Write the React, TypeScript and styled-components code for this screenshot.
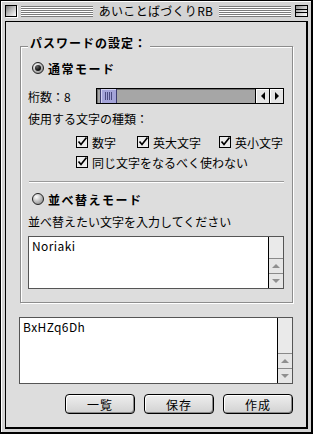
import React from 'react'
import styled, { createGlobalStyle } from 'styled-components'

const GlobalStyle = createGlobalStyle`
  html, body { margin: 0; padding: 0; background: #fff; }
  body {
    font-family: "Noto Sans CJK JP", "Noto Sans", sans-serif;
    font-size: 12px;
    color: #000;
  }
  * { box-sizing: border-box; }
`

const Window = styled.div`
  width: 313px;
  height: 434px;
  border-style: solid;
  border-color: #000;
  border-width: 1px 2px 2px 1px;
  background: #d4d4d4;
  box-shadow: inset 1px 1px 0 #fff;
  padding: 0 3px 3px 4px;
  display: flex;
  flex-direction: column;
`

const TitleBar = styled.div`
  height: 20px;
  flex: none;
  display: flex;
  align-items: center;
  gap: 4px;
`

const CloseBox = styled.div`
  width: 12px;
  height: 12px;
  flex: none;
  border: 1px solid #000;
  background: linear-gradient(135deg, #777 0%, #bbb 45%, #fff 100%);
  box-shadow: 1px 1px 0 #fff;
`

const Stripes = styled.div`
  flex: 1;
  height: 11px;
  background: repeating-linear-gradient(to bottom, #7a7a7a 0 1px, #fff 1px 2px);
`

const Title = styled.div`
  flex: none;
  padding: 0 2px;
  font-size: 12px;
  line-height: 16px;
  letter-spacing: 0.3px;
`

const ZoomBox = styled.div`
  width: 13px;
  height: 12px;
  flex: none;
  border: 1px solid #000;
  background:
    linear-gradient(#000, #000) 0 3px / 100% 1px no-repeat,
    linear-gradient(#000, #000) 0 6px / 100% 1px no-repeat,
    linear-gradient(135deg, #888 0%, #ccc 50%, #fff 100%);
`

const Content = styled.div`
  flex: 1;
  border-style: solid;
  border-color: #000;
  border-width: 1px 2px 2px 1px;
  background: #dddddd;
  padding: 24px 13px 0 14px;
  display: flex;
  flex-direction: column;
`

const GroupBox = styled.div`
  border: 1px solid #8c8c8c;
  box-shadow: inset 1px 1px 0 #fff, 1px 1px 0 #fff;
  padding: 0 8px 13px 7px;
  display: flex;
  flex-direction: column;
`

const GroupTitle = styled.div`
  margin-top: -11px;
  align-self: flex-start;
  background: #dddddd;
  padding: 0 3px 0 2px;
  font-weight: bold;
  font-size: 12px;
  line-height: 14px;
  letter-spacing: 1px;
`

const Row = styled.div<{ $top?: number; $indent?: number }>`
  height: 20px;
  margin-top: ${p => p.$top ?? 0}px;
  padding-left: ${p => p.$indent ?? 0}px;
  display: flex;
  align-items: center;
  white-space: nowrap;
`

const RadioDot = styled.span<{ $on?: boolean }>`
  position: relative;
  width: 12px;
  height: 12px;
  flex: none;
  border-radius: 50%;
  border: 1px solid #222;
  background: radial-gradient(circle at 35% 30%, #fff 0, #d0d0d0 35%, #7a7a7a 100%);
  margin-right: 4px;
  &::after {
    content: '';
    display: ${p => (p.$on ? 'block' : 'none')};
    position: absolute;
    inset: 2px;
    border-radius: 50%;
    background: radial-gradient(circle at 35% 30%, #666 0, #111 60%);
  }
`

const RadioLabel = styled.span`
  font-weight: bold;
  letter-spacing: 1.5px;
`

const Label = styled.span<{ $width?: number }>`
  width: ${p => (p.$width ? `${p.$width}px` : 'auto')};
  flex: none;
`

const Slider = styled.div`
  width: 188px;
  height: 16px;
  border: 1px solid #000;
  display: flex;
`

const SliderTrack = styled.div`
  flex: 1;
  display: flex;
  background: #a6a6a6;
  box-shadow: inset 1px 1px 0 #6e6e6e;
  padding-left: 3px;
`

const Thumb = styled.div`
  width: 17px;
  height: 100%;
  border-left: 1px solid #3c3c6e;
  border-right: 1px solid #3c3c6e;
  background:
    repeating-linear-gradient(to right, #4a4a80 0 1px, transparent 1px 2px) 4px 3px / 7px 8px no-repeat,
    #a3a3d8;
  box-shadow: inset 1px 1px 0 #d0d0f0;
`

const ArrowBox = styled.div`
  width: 14px;
  flex: none;
  border-left: 1px solid #000;
  background: #e4e4e4;
  box-shadow: inset 1px 1px 0 #fff;
  display: flex;
  align-items: center;
  justify-content: center;
`

const CheckItem = styled.span<{ $width?: number }>`
  width: ${p => (p.$width ? `${p.$width}px` : 'auto')};
  flex: none;
  display: flex;
  align-items: center;
  gap: 4px;
`

const Separator = styled.div`
  height: 2px;
  margin: 9px 0 0 1px;
  border-top: 1px solid #9a9a9a;
  border-bottom: 1px solid #fff;
`

const TextField = styled.div<{ $height: number; $top: number; $left: number }>`
  height: ${p => p.$height}px;
  margin-top: ${p => p.$top}px;
  margin-left: ${p => p.$left}px;
  border: 1px solid #555;
  background: #fff;
  display: flex;
`

const FieldText = styled.div`
  flex: 1;
  padding: 1px 3px;
  font-size: 12px;
  line-height: 16px;
  letter-spacing: 0.4px;
`

const ScrollBar = styled.div`
  width: 15px;
  flex: none;
  border-left: 1px solid #000;
  background: #eaeaea;
  display: flex;
  flex-direction: column;
  justify-content: flex-end;
`

const ScrollArrow = styled.div`
  height: 15px;
  border-top: 1px solid #8a8a8a;
  background: #e6e6e6;
  display: flex;
  align-items: center;
  justify-content: center;
`

const ButtonRow = styled.div`
  margin-top: 10px;
  display: flex;
  justify-content: flex-end;
  gap: 9px;
`

const Button = styled.div`
  width: 70px;
  height: 20px;
  border: 1px solid #000;
  border-radius: 4px;
  background: linear-gradient(#eeeeee, #d2d2d2);
  box-shadow: inset 1px 1px 0 #fff, inset -1px -1px 0 #8a8a8a;
  display: flex;
  align-items: center;
  justify-content: center;
  font-size: 12px;
  letter-spacing: 1px;
`

function Check() {
  return (
    <svg width="12" height="12" viewBox="0 0 12 12">
      <rect x="0.5" y="0.5" width="11" height="11" fill="#ececec" stroke="#000" />
      <path d="M2.5 5.5 L5 8.5 L10.5 1.5" stroke="#000" strokeWidth="1.7" fill="none" />
    </svg>
  )
}

function Tri({ dir, color }: { dir: 'left' | 'right' | 'up' | 'down'; color: string }) {
  const pts = {
    left: '4,0 4,8 0,4',
    right: '0,0 0,8 4,4',
    up: '0,4 8,4 4,0',
    down: '0,0 8,0 4,4',
  }[dir]
  const horiz = dir === 'left' || dir === 'right'
  return (
    <svg width={horiz ? 4 : 8} height={horiz ? 8 : 4} viewBox={horiz ? '0 0 4 8' : '0 0 8 4'}>
      <polygon points={pts} fill={color} />
    </svg>
  )
}

function Field({ text, height, top, left = 0 }: { text: string; height: number; top: number; left?: number }) {
  return (
    <TextField $height={height} $top={top} $left={left}>
      <FieldText>{text}</FieldText>
      <ScrollBar>
        <ScrollArrow><Tri dir="up" color="#8f8f8f" /></ScrollArrow>
        <ScrollArrow><Tri dir="down" color="#8f8f8f" /></ScrollArrow>
      </ScrollBar>
    </TextField>
  )
}

export default function App() {
  return (
    <>
      <GlobalStyle />
      <Window>
        <TitleBar>
          <CloseBox />
          <Stripes />
          <Title>あいことばづくりRB</Title>
          <Stripes />
          <ZoomBox />
        </TitleBar>
        <Content>
          <GroupBox>
            <GroupTitle>パスワードの設定：</GroupTitle>
            <Row $top={8} $indent={4}>
              <RadioDot $on />
              <RadioLabel>通常モード</RadioLabel>
            </Row>
            <Row $top={8}>
              <Label $width={68}>桁数：8</Label>
              <Slider>
                <SliderTrack>
                  <Thumb />
                </SliderTrack>
                <ArrowBox><Tri dir="left" color="#000" /></ArrowBox>
                <ArrowBox><Tri dir="right" color="#000" /></ArrowBox>
              </Slider>
            </Row>
            <Row $top={2}>
              <Label>使用する文字の種類：</Label>
            </Row>
            <Row $top={4} $indent={48}>
              <CheckItem $width={61}><Check />数字</CheckItem>
              <CheckItem $width={82}><Check />英大文字</CheckItem>
              <CheckItem><Check />英小文字</CheckItem>
            </Row>
            <Row $indent={48}>
              <CheckItem><Check />同じ文字をなるべく使わない</CheckItem>
            </Row>
            <Separator />
            <Row $top={6} $indent={4}>
              <RadioDot />
              <RadioLabel>並べ替えモード</RadioLabel>
            </Row>
            <Row $top={2}>
              <Label>並べ替えたい文字を入力してください</Label>
            </Row>
            <Field text="Noriaki" height={53} top={5} />
          </GroupBox>
          <Field text="BxHZq6Dh" height={67} top={14} left={-1} />
          <ButtonRow>
            <Button>一覧</Button>
            <Button>保存</Button>
            <Button>作成</Button>
          </ButtonRow>
        </Content>
      </Window>
    </>
  )
}
